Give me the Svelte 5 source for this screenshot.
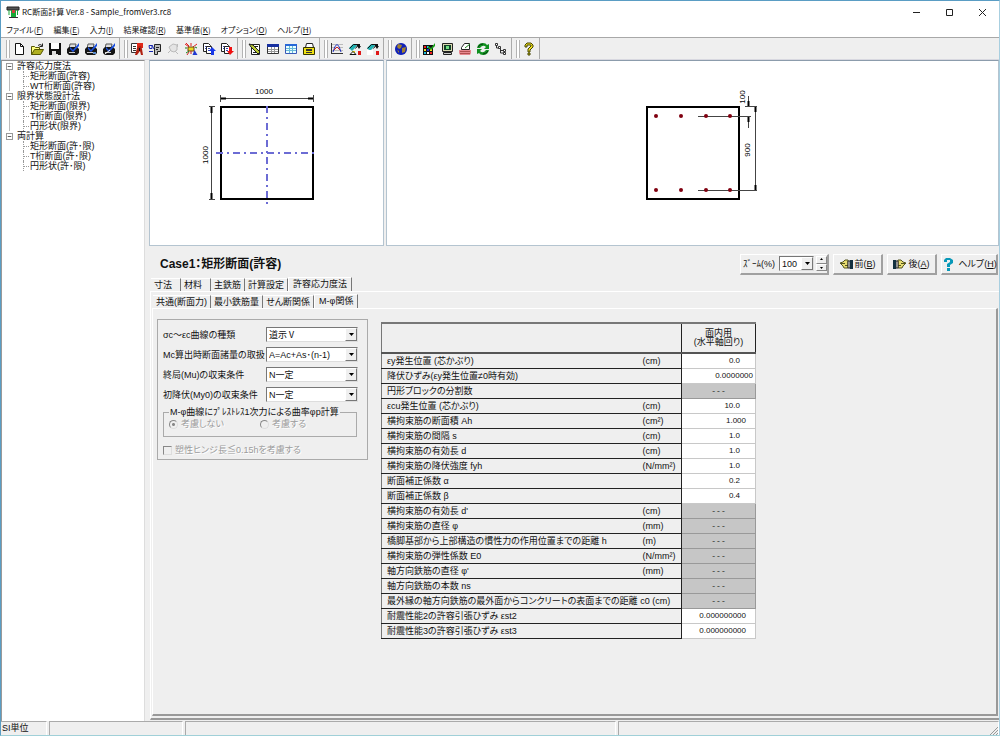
<script lang="ts">
  type Shape = [d: string, fill: string, stroke?: string];
  type Row = { label: string; unit?: string; value?: string; fmt?: string };

  const menus = [
    ['ファイル', 'F'], ['編集', 'E'], ['入力', 'I'], ['結果確認', 'R'],
    ['基準値', 'K'], ['オプション', 'O'], ['ヘルプ', 'H'],
  ];

  const printer: Shape[] = [
    ['M4 2h6l-1 5H3z', '#ddd', '#555'],
    ['M1 7l2-2h8l2 2v4l-2 2H3l-2-2z', '#151515'],
    ['M3 10h6v1H3z', '#ccc'],
    ['M4 5l3 3 6-7v3L7 10 4 7z', '#1a50e0'],
  ];
  const page: Shape[] = [
    ['M1.500 1.500h5l2 2v6h-7z', '#fff', '#222'],
    ['M3 4.500h3M3 6.500h3', 'none', '#3848b0'],
    ['M4.500 4.500h5v7h-5z', '#fff', '#222'],
    ['M6 6.500h2M6 8.500h2', 'none', '#3848b0'],
  ];
  const bridge: Shape[] = [
    ['M1 6l4-4h5l-3 4-3 3z', '#20b0b0'],
    ['M1.500 6.500l4-4h5l-3 4', 'none', '#111'],
    ['M9 2h3v2h1l-2 3-2-3z', '#111'],
    ['M10 9h3v4h-3z', '#e01818'],
  ];

  const icons: Record<string, Shape[]> = {
    new: [['M3.500 1.500h5l3 3v8h-8z', '#fff', '#111'], ['M8.500 1.500v3h3', 'none', '#111']],
    open: [
      ['M1.500 12.500v-8h3l1 1h4v2', '#ffff80', '#555500'],
      ['M1.500 12.500l3-5h9l-3 5z', '#b0b020', '#555500'],
      ['M8 3.500q2-2 4 0M12.500 1.500v3h-3', 'none', '#222'],
    ],
    save: [['M1 1h12v12H1z', '#111'], ['M3 1h8v6H3z', '#fff'], ['M4 9h6v4H4z', '#ddd'], ['M8 9h2v3H8z', '#111']],
    print1: printer,
    print2: [...printer, ['M9 10h3v2H9z', '#58c']],
    print3: [...printer, ['M3 12l5-4', 'none', '#fff']],
    find: [
      ['M1.500 1.500h6v9h-6z', '#fff', '#333'], ['M3 4.500h3M3 6.500h3M3 8.500h3', 'none', '#333'],
      ['M7 1h6v5H7z', '#e02818'], ['M7 6l2-2h2l1 3 1 6h-2l-1-4-3 4H5z', '#b02010'], ['M9.500 6v3', 'none', '#111'],
    ],
    ear: [
      ['M1 3.500h3v3H1.500zM4 3l2 4M1 9.500h4', 'none', '#1828b0'],
      ['M6.500 2.500h6v7h-3v3h-3v-7z', '#bbb', '#222'], ['M8 5.500h3M8 7.500h2', 'none', '#222'],
    ],
    disabled: [
      ['M3 5l4-3 4 1v5l-3 2-3-1z', '#e4e4e4', '#bbb'], ['M2 11l3-3M9 9l3 3M11.500 2v3', 'none', '#bbb'],
    ],
    person: [
      ['M1 2l4 3M13 2l-4 3M7 1v3M2 1l3 3', 'none', '#e02020'], ['M4 5h6v4H4z', '#e8d820', '#704010'],
      ['M2 11l3-2M3 6H1M11 5l2 1', 'none', '#188018'], ['M10.500 8l3 5h-5z', '#2038d0'], ['M5 10l-2 3M7 9v3', 'none', '#d02020'],
    ],
    upload: [...page, ['M10 5l4 4h-2v4H9V9H7z', '#1838e8']],
    download: [...page, ['M9 5h3v4h2l-4 4-3-4h2z', '#f01010']],
    edit: [
      ['M3.500 2.500h8v10h-8z', '#fff', '#222'], ['M1 2l4 1 7 7-2 2-7-7z', '#b8c830', '#222'],
      ['M5 10.500h3M7 4.500h3', 'none', '#222'],
    ],
    table: [
      ['M1.500 2.500h11v9h-11z', '#fff', '#333'], ['M1 2h12v3H1z', '#1830a0'],
      ['M2 7.500h10M2 9.500h10M5.500 5v6M8.500 5v6', 'none', '#999'],
    ],
    list: [
      ['M1.500 2.500h11v9h-11z', '#e8ffff', '#3858b8'], ['M1 2h12v2H1z', '#2868d8'],
      ['M2 6.500h10M2 8.500h10M5.500 4v7M8.500 4v7', 'none', '#68b8d8'],
    ],
    cabinet: [
      ['M4.500 1.500h6l1 4h-8z', '#fff', '#222'], ['M1.500 5.500h11v7h-11z', '#f0e010', '#333300'],
      ['M4 7h6v2H4z', '#333'], ['M4 10.500h6', 'none', '#333'],
    ],
    chart: [
      ['M1.500 1v11M1 11.500h12', 'none', '#333'], ['M2 2.500h11M2 5.500h11M2 8.500h11', 'none', '#bbb'],
      ['M3 10q4-15 8 0', 'none', '#2030c0'], ['M4 8l3-3 3 3', 'none', '#d02020'],
    ],
    bridge1: [...bridge, ['M4 9h3v2H4z', '#e8d810'], ['M2 12.500l3-3 3 3z', '#fff', '#111']],
    bridge2: [...bridge, ['M1 8h6v5H1z', '#fff']],
    globe: [
      ['M7 1a6 6 0 1 0 .01 0z', '#1020b8'], ['M4 2l4 1-1 3-2 1-2-2zM8 6l4-1-1 5-3 1z', '#a08030'],
      ['M3 8l2 1v2z', '#a08030'],
    ],
    colors: [
      ['M1 3h10v10H1z', '#111'], ['M2 4h2v2H2zM8 10h2v2H8z', '#f02020'], ['M5 4h2v2H5zM2 10h2v2H2z', '#20c0e0'],
      ['M2 7h2v2H2zM8 7h2v2H8z', '#f0e020'], ['M5 7h2v2H5z', '#2030e0'], ['M5 10h2v2H5z', '#fff'],
      ['M6 4l3 2 4-5v3L9 8 6 6z', '#18a018'],
    ],
    monitor: [
      ['M2.500 1.500h10v8h-10z', '#d8d8b0', '#222'], ['M4 3h7v5H4z', '#104028'], ['M6 4h3v3H6z', '#70e080'],
      ['M3.500 10.500h8v2h-8z', '#ccc', '#222'],
    ],
    book: [
      ['M3.500 5.500l3-4h5v6h-8z', '#fff', '#222'], ['M1 8h12v3l-1 2H2l-1-2z', '#e88890'],
      ['M2 9.500h10M2 11.500h10', 'none', '#b05050'], ['M7 6l5-4', 'none', '#188018'],
    ],
    refresh: [
      ['M1 6q1-5 6-5 3 0 4 2l2-1v5H8l2-2q-3-3-6 1z', '#109020'],
      ['M13 8q-1 5-6 5-3 0-4-2l-2 1V7h5L4 9q3 3 6-1z', '#109020'],
      ['M2 5q2-3 5-3M12 9q-2 3-5 3', 'none', '#084010'],
    ],
    tree: [
      ['M2.500 3v3h4M6.500 6v5h4M6.500 8.500h4', 'none', '#333'],
      ['M1.500 1.500h2v2h-2zM4.500 4.500h2v2h-2zM9.500 7.500h2v2h-2zM9.500 10.500h2v2h-2z', '#fff', '#333'],
    ],
    help: [
      ['M3 5V3l2-2h4l2 2v2L8 8v2H6V7l3-3V3H5v2z', '#f0e020', '#444400'], ['M6 11h2v2H6z', '#f0e020', '#444400'],
    ],
    handLeft: [
      ['M1 6l3-1 2-2h3v8H5L4 9z', '#e8dc70', '#555520'], ['M1 6.500h5M6 8.500h3', 'none', '#555520'],
      ['M9 4h2v7H9z', '#fff', '#222'], ['M11 3h3v9h-3z', '#123040'],
    ],
    handRight: [
      ['M13 6l-3-1-2-2H5v8h4l1-2z', '#e8dc70', '#555520'], ['M13 6.500H8M8 8.500H5', 'none', '#555520'],
      ['M3 4h2v7H3z', '#fff', '#222'], ['M0 3h3v9H0z', '#123040'],
    ],
    question: [['M3 5V3l2-2h4l3 2v3L9 8v2H6V7l3-2V3H6v2z', '#0898b8'], ['M6 11h3v3H6z', '#0898b8']],
    app: [
      ['M1 2h12v3H1z', '#555', '#222'], ['M5 5h5v8H5z', '#18a838'], ['M6 5h3v3H6z', '#d04040'],
      ['M3 5v5M11.500 5v5', 'none', '#18a838'], ['M3 12.500h9', 'none', '#333'],
    ],
  };

  const toolbar = [
    ['new', 'open', 'save', 'print1', 'print2', 'print3'],
    ['find', 'ear', 'disabled', 'person', 'upload', 'download'],
    ['edit', 'table', 'list', 'cabinet'],
    ['chart', 'bridge1', 'bridge2'],
    ['globe'],
    ['colors', 'monitor', 'book', 'refresh', 'tree'],
    ['help'],
  ];

  let tree = $state([
    { name: '許容応力度法', open: true, items: ['矩形断面(許容)', 'WT桁断面(許容)'] },
    { name: '限界状態設計法', open: true, items: ['矩形断面(限界)', 'T桁断面(限界)', '円形状(限界)'] },
    { name: '両計算', open: true, items: ['矩形断面(許･限)', 'T桁断面(許･限)', '円形状(許･限)'] },
  ]);

  const mainTabs = ['寸法', '材料', '主鉄筋', '計算設定', '許容応力度法'];
  const subTabs = ['共通(断面力)', '最小鉄筋量', 'せん断関係', 'M-φ関係'];
  let mainTab = $state(4);
  let subTab = $state(3);

  const combos = [
    { id: 'curve', label: 'σc～εc曲線の種類', value: '道示Ⅴ' },
    { id: 'mc', label: 'Mc算出時断面諸量の取扱', value: 'A=Ac+As･(n-1)' },
    { id: 'mu', label: '終局(Mu)の収束条件', value: 'N一定' },
    { id: 'my0', label: '初降伏(My0)の収束条件', value: 'N一定' },
  ];

  // rows without a value are not editable for the current settings
  const rows: Row[] = [
    { label: 'εy発生位置 (芯かぶり)', unit: '(cm)', value: '0.0' },
    { label: '降伏ひずみ(εy発生位置≠0時有効)', value: '0.0000000', fmt: 'full' },
    { label: '円形ブロックの分割数' },
    { label: 'εcu発生位置 (芯かぶり)', unit: '(cm)', value: '10.0' },
    { label: '横拘束筋の断面積 Ah', unit: '(cm²)', value: '1.000', fmt: 'long' },
    { label: '横拘束筋の間隔 s', unit: '(cm)', value: '1.0' },
    { label: '横拘束筋の有効長 d', unit: '(cm)', value: '1.0' },
    { label: '横拘束筋の降伏強度 fyh', unit: '(N/mm²)', value: '1.0' },
    { label: '断面補正係数 α', value: '0.2' },
    { label: '断面補正係数 β', value: '0.4' },
    { label: "横拘束筋の有効長 d'", unit: '(cm)' },
    { label: '横拘束筋の直径 φ', unit: '(mm)' },
    { label: '橋脚基部から上部構造の慣性力の作用位置までの距離 h', unit: '(m)' },
    { label: '横拘束筋の弾性係数 E0', unit: '(N/mm²)' },
    { label: "軸方向鉄筋の直径 φ'", unit: '(mm)' },
    { label: '軸方向鉄筋の本数 ns' },
    { label: '最外縁の軸方向鉄筋の最外面からコンクリートの表面までの距離 c0 (cm)' },
    { label: '耐震性能2の許容引張ひずみ εst2', value: '0.000000000', fmt: 'long' },
    { label: '耐震性能3の許容引張ひずみ εst3', value: '0.000000000', fmt: 'long' },
  ];

  const bars = [43, 68, 93, 117];
</script>

{#snippet icon(name: string)}
  <svg class="icon" viewBox="0 0 14 14" aria-hidden="true">
    {#each icons[name] as [d, fill, stroke]}
      <path {d} {fill} stroke={stroke ?? 'none'} />
    {/each}
  </svg>
{/snippet}

{#snippet arrow()}
  <span class="arrow" aria-hidden="true">
    <svg viewBox="0 0 5 3"><path d="M0 0h5L2.500 3z" /></svg>
  </span>
{/snippet}

<div class="window">
  <header class="titlebar">
    {@render icon('app')}
    <span class="title">RC断面計算 Ver.8 - Sample_fromVer3.rc8</span>
    <button class="caption" aria-label="最小化"><svg viewBox="0 0 9 9"><path d="M1 4.500h7" /></svg></button>
    <button class="caption" aria-label="最大化"><svg viewBox="0 0 9 9"><path d="M1.500 1.500h6v6h-6z" /></svg></button>
    <button class="caption" aria-label="閉じる"><svg viewBox="0 0 9 9"><path d="M1 1l7 7M8 1L1 8" /></svg></button>
  </header>

  <nav class="menubar">
    {#each menus as [name, key]}
      <button>{name}(<u>{key}</u>)</button>
    {/each}
  </nav>

  <div class="toolbar">
    {#each toolbar as group}
      <div class="tool-group">
        <span class="grip"></span>
        {#each group as name}
          <button class="tool" aria-label={name} disabled={name === 'disabled'}>{@render icon(name)}</button>
        {/each}
      </div>
    {/each}
  </div>

  <div class="workspace">
    <aside class="tree">
      <ul>
        {#each tree as node}
          <li class="branch">
            <div class="node">
              <button class="toggle" aria-label={node.name} onclick={() => (node.open = !node.open)}>
                <svg viewBox="0 0 7 7"><path d={node.open ? 'M1 3.500h5' : 'M1 3.500h5M3.500 1v5'} /></svg>
              </button>
              <span>{node.name}</span>
            </div>
            {#if node.open}
              <ul class="leaves">
                {#each node.items as item}
                  <li><button>{item}</button></li>
                {/each}
              </ul>
            {/if}
          </li>
        {/each}
      </ul>
    </aside>

    <main>
      <div class="previews">
        <section class="preview shape">
          <svg class="drawing" viewBox="0 0 160 160">
            <path class="dim" d="M34 25.500h92M33.500 22v7M126.500 22v7M24.500 34v92M22 33.500h6M22 126.500h6" />
            <path class="tick" d="M34 25.500h5M121 25.500h5M24.500 34v6M24.500 120v6" />
            <rect class="outline" x="34" y="34" width="92" height="92" />
            <path class="axis" d="M80 33v99M29 80h101" />
            <text x="77" y="21">1000</text>
            <text transform="translate(21 82) rotate(-90)">1000</text>
          </svg>
        </section>
        <section class="preview rebar">
          <svg class="drawing" viewBox="0 0 160 160">
            <rect class="outline" x="34" y="34" width="92" height="92" />
            <path class="dim" d="M85 43.500h53M85 117.500h59M132 33.500h12M142.500 34v84M135.500 23v10M135.500 44v11" />
            <path class="tick" d="M142.500 34v5M142.500 112v5M135.500 28v5M135.500 44v5" />
            {#each bars as x}
              <circle class="bar" cx={x} cy="43" r="2" />
              <circle class="bar" cx={x} cy="117" r="2" />
            {/each}
            <text transform="translate(132 24) rotate(-90)">100</text>
            <text transform="translate(137 77) rotate(-90)">900</text>
          </svg>
        </section>
      </div>

      <div class="case-bar">
        <h1>Case1：矩形断面(許容)</h1>
        <div class="zoom raised">
          <label for="zoom">ｽﾞｰﾑ(%)</label>
          <span class="combo zoom-combo">
            <select id="zoom"><option>100</option></select>
            {@render arrow()}
          </span>
          <span class="spinner">
            <button aria-label="拡大"><svg viewBox="0 0 5 3"><path d="M1 2h3L2.500 0z" /></svg></button>
            <button aria-label="縮小"><svg viewBox="0 0 5 3"><path d="M1 1h3L2.500 3z" /></svg></button>
          </span>
        </div>
        <button class="raised command">{@render icon('handLeft')}<span>前(<u>B</u>)</span></button>
        <button class="raised command">{@render icon('handRight')}<span>後(<u>A</u>)</span></button>
        <button class="raised command help">{@render icon('question')}<span>ヘルプ(<u>H</u>)</span></button>
      </div>

      <div class="tabs main-tabs" role="tablist">
        {#each mainTabs as tab, i}
          <button role="tab" aria-selected={mainTab === i} class:selected={mainTab === i} onclick={() => (mainTab = i)}>{tab}</button>
        {/each}
      </div>

      <div class="page outer">
        <div class="tabs sub-tabs" role="tablist">
          {#each subTabs as tab, i}
            <button role="tab" aria-selected={subTab === i} class:selected={subTab === i} onclick={() => (subTab = i)}>{tab}</button>
          {/each}
        </div>

        <div class="page inner">
          <form class="settings">
            {#each combos as combo}
              <div class="field">
                <label for={combo.id}>{combo.label}</label>
                <span class="combo">
                  <select id={combo.id}><option>{combo.value}</option></select>
                  {@render arrow()}
                </span>
              </div>
            {/each}
            <fieldset>
              <legend>M-φ曲線にﾌﾟﾚｽﾄﾚｽ1次力による曲率φp計算</legend>
              <label><input type="radio" name="prestress" checked disabled />考慮しない</label>
              <label><input type="radio" name="prestress" disabled />考慮する</label>
            </fieldset>
            <label class="hinge"><input type="checkbox" disabled />塑性ヒンジ長≦0.15hを考慮する</label>
          </form>

          <table>
            <thead>
              <tr>
                <th class="head" colspan="2"></th>
                <th class="head direction">面内用<br />(水平軸回り)</th>
              </tr>
            </thead>
            <tbody>
              {#each rows as row}
                <tr>
                  {#if row.unit}
                    <th class="label" scope="row">{row.label}</th>
                    <td class="unit">{row.unit}</td>
                  {:else}
                    <th class="label whole" scope="row" colspan="2">{row.label}</th>
                  {/if}
                  {#if row.value}
                    <td class="value {row.fmt ?? ''}">{row.value}</td>
                  {:else}
                    <td class="value locked">---</td>
                  {/if}
                </tr>
              {/each}
            </tbody>
          </table>
        </div>
      </div>
    </main>
  </div>

  <footer class="statusbar">
    <span class="pane unit-system">SI単位</span>
    <span class="pane message"></span>
    <span class="pane detail"></span>
    <span class="pane rest">
      <svg viewBox="0 0 9 9"><path d="M1 9l8-8M4 9l5-5M7 9l2-2" /></svg>
    </span>
  </footer>
</div>

<style>
  :global(body) {
    background: #efefef;
  }
  .window {
    display: flex;
    flex-direction: column;
    min-height: 100vh;
    box-sizing: border-box;
    border: 1px solid #5a9dc4;
    border-right-color: #a8cfe0;
    border-bottom-color: #a0d0d8;
    background: #efefef;
    color: #111;
    font-family: "Liberation Sans", "Noto Sans CJK JP", sans-serif;
    font-size: 9px;
    line-height: 10px;
    font-feature-settings: "palt";
    white-space: nowrap;
  }
  button, select {
    font: inherit;
    font-feature-settings: inherit;
    color: inherit;
  }
  button {
    padding: 0;
    border: 0;
    background: none;
  }
  ul {
    margin: 0;
    padding: 0;
    list-style: none;
  }
  .icon {
    display: block;
    flex: none;
    width: 14px;
    height: 14px;
  }

  .titlebar {
    display: flex;
    align-items: center;
    height: 22px;
    padding-left: 5px;
    background: #fff;
    font-family: "Noto Sans CJK JP", sans-serif;
    font-size: 8px;
  }
  .title {
    flex: 1;
    padding-left: 2px;
  }
  .caption {
    display: flex;
    align-items: center;
    justify-content: center;
    width: 33px;
    height: 20px;
  }
  .caption svg {
    width: 9px;
    height: 9px;
    fill: none;
    stroke: #222;
  }
  .menubar {
    display: flex;
    gap: 10px;
    height: 14px;
    padding-left: 5px;
    background: #fff;
    font-family: "Noto Sans CJK JP", sans-serif;
    font-size: 8px;
  }

  .toolbar {
    display: flex;
    box-sizing: border-box;
    height: 23px;
    padding-left: 1px;
    border-top: 1px solid #a8a8a8;
    border-bottom: 1px solid #d8d8e0;
  }
  .tool-group {
    display: flex;
    align-items: center;
    padding: 0 1px 0 4px;
    border-right: 1px solid #aaa;
  }
  .grip {
    box-sizing: border-box;
    width: 4px;
    height: 18px;
    border-left: 1px solid #b4b4b4;
    border-right: 1px solid #b4b4b4;
    background: #fff;
  }
  .tool {
    display: flex;
    justify-content: center;
    width: 18px;
  }

  .workspace {
    display: flex;
    flex: 1;
  }
  .tree {
    box-sizing: border-box;
    flex: none;
    width: 144px;
    padding: 0 0 0 4px;
    border-top: 1px solid #8e8e8e;
    border-left: 1px solid #999;
    border-right: 1px solid #ddd;
    background: #fff;
  }
  .branch:not(:last-child) {
    background: linear-gradient(#bbb, #bbb) 3px 8px / 1px 100% no-repeat;
  }
  .node {
    display: flex;
    align-items: center;
    height: 10px;
  }
  .toggle {
    display: flex;
    box-sizing: border-box;
    width: 7px;
    height: 7px;
    margin-right: 4px;
    border: 1px solid #999;
    background: #fff;
  }
  .toggle svg {
    width: 100%;
    stroke: #222;
  }
  .leaves {
    margin-left: 17px;
  }
  .leaves li {
    display: flex;
    height: 10px;
    border-left: 1px dotted #999;
    align-items: center;
  }
  .leaves li::before {
    content: "";
    width: 5px;
    margin-right: 1px;
    border-top: 1px dotted #999;
  }

  main {
    display: flex;
    flex: 1;
    flex-direction: column;
    min-width: 0;
    padding-left: 4px;
  }
  .previews {
    display: flex;
    gap: 2px;
    height: 186px;
  }
  .preview {
    display: flex;
    align-items: center;
    justify-content: center;
    box-sizing: border-box;
    border: 1px solid #b4c4d0;
    border-top-color: #8c9cac;
    background: #fff;
  }
  .shape {
    width: 235px;
  }
  .rebar {
    flex: 1;
  }
  .drawing {
    width: 160px;
    height: 160px;
  }
  .drawing text {
    font-size: 8px;
    text-anchor: middle;
  }
  .outline {
    fill: none;
    stroke: #000;
    stroke-width: 2;
  }
  .dim {
    fill: none;
    stroke: #444;
  }
  .tick {
    fill: none;
    stroke: #000;
    stroke-width: 2;
  }
  .axis {
    fill: none;
    stroke: #6c6cd4;
    stroke-width: 2;
    stroke-dasharray: 7 4 2 4;
  }
  .bar {
    fill: #800010;
  }

  .case-bar {
    display: flex;
    align-items: center;
    gap: 4px;
    height: 22px;
    padding: 7px 1px 3px 11px;
  }
  h1 {
    flex: 1;
    margin: 0;
    font-size: 12px;
    line-height: 16px;
  }
  .raised {
    display: flex;
    align-items: center;
    box-sizing: border-box;
    height: 21px;
    border: 1px solid #fff;
    border-right: 2px solid #a0a0a0;
    border-bottom: 2px solid #a0a0a0;
  }
  .command {
    justify-content: center;
    gap: 1px;
    width: 50px;
  }
  .help {
    gap: 3px;
    width: 57px;
  }
  .zoom {
    gap: 2px;
    width: 89px;
    padding-left: 2px;
  }
  .zoom label {
    width: 34px;
  }

  .combo {
    display: flex;
    box-sizing: border-box;
    width: 92px;
    height: 15px;
    border: 1px solid #777;
    border-right-color: #ddd;
    border-bottom-color: #ddd;
    background: #fff;
  }
  .combo select {
    flex: 1;
    min-width: 0;
    padding: 0 2px;
    border: 0;
    background: #fff;
    appearance: none;
  }
  .arrow {
    display: flex;
    align-items: center;
    justify-content: center;
    box-sizing: border-box;
    width: 12px;
    border: 1px solid #fff;
    border-right-color: #777;
    border-bottom-color: #777;
    background: #efefef;
    pointer-events: none;
  }
  .arrow svg, .spinner svg {
    width: 5px;
    height: 3px;
  }
  .zoom-combo {
    width: 35px;
  }
  .spinner {
    display: grid;
    width: 11px;
    height: 15px;
  }
  .spinner button {
    display: flex;
    align-items: center;
    justify-content: center;
    border: 1px solid #fff;
    border-right-color: #888;
    border-bottom-color: #888;
  }

  .tabs {
    display: flex;
    align-items: flex-end;
  }
  .tabs button {
    height: 13px;
    padding: 0 3px;
    border-top: 1px solid #fff;
    border-right: 1px solid #777;
  }
  .tabs button.selected {
    height: 14px;
    padding: 0 4px 2px;
    border-left: 1px solid #fff;
  }
  .main-tabs {
    height: 13px;
    padding-left: 2px;
  }
  .main-tabs button {
    min-width: 30px;
    text-align: left;
  }
  .sub-tabs {
    height: 16px;
    padding-left: 1px;
  }
  .page {
    border: 1px solid #fff;
    border-right: 2px solid #999;
    border-bottom: 2px solid #999;
  }
  .outer {
    display: flex;
    flex: 1;
    flex-direction: column;
    margin: 0 0 1px 1px;
    padding: 0 0 2px 1px;
    border-right: 0;
  }
  .inner {
    display: flex;
    flex: 1;
    align-items: flex-start;
    gap: 13px;
    margin-right: 1px;
    padding: 10px 4px;
  }

  .settings {
    box-sizing: border-box;
    width: 211px;
    height: 141px;
    padding: 7px 5px;
    border: 1px solid #aaa;
  }
  .field {
    display: flex;
    align-items: center;
    height: 15px;
    margin-bottom: 5px;
  }
  .field label {
    width: 103px;
  }
  fieldset {
    display: flex;
    box-sizing: border-box;
    width: 191px;
    height: 30px;
    margin: 0 0 8px;
    padding: 2px 5px 0;
    border: 1px solid #aaa;
  }
  legend {
    padding: 0 1px;
  }
  fieldset label, .hinge {
    display: flex;
    align-items: center;
    height: 10px;
    gap: 3px;
    color: #9c9c9c;
    text-shadow: 1px 1px #fff;
  }
  fieldset label {
    width: 91px;
  }
  .settings input {
    box-sizing: border-box;
    width: 9px;
    height: 9px;
    margin: 0;
    border: 1px solid #888;
    border-right-color: #ddd;
    border-bottom-color: #ddd;
    appearance: none;
  }
  .settings input[type="radio"] {
    border-radius: 50%;
  }
  .settings input[type="radio"]:checked {
    background: radial-gradient(circle, #888 0 1px, transparent 2px);
  }

  table {
    margin-top: 3px;
    border-collapse: collapse;
    border-top: 2px solid #777;
    border-left: 1px solid #777;
  }
  th, td {
    box-sizing: border-box;
    height: 15px;
    padding: 0;
    font-weight: normal;
    line-height: 10px;
    text-align: left;
  }
  .head {
    height: 30px;
    border-bottom: 2px solid #555;
    border-right: 1px solid #222;
  }
  .direction {
    text-align: center;
    line-height: 9px;
  }
  .label {
    width: 261px;
    padding-left: 5px;
    border-bottom: 1px solid #222;
  }
  .whole {
    width: 300px;
    border-right: 1px solid #222;
  }
  .unit {
    width: 39px;
    border-bottom: 1px solid #222;
    border-right: 1px solid #222;
  }
  .value {
    width: 74px;
    padding-right: 15px;
    border: 1px solid #c8c8c8;
    border-left-color: #222;
    background: #fff;
    font-size: 8px;
    text-align: right;
  }
  .long {
    padding-right: 9px;
  }
  .full {
    padding-right: 2px;
  }
  .locked {
    padding: 0;
    border: 1px solid #999;
    border-left-color: #222;
    background: #c6c6c6;
    font-family: "Liberation Mono", monospace;
    text-align: center;
  }

  .statusbar {
    display: flex;
    gap: 2px;
    height: 14px;
  }
  .pane {
    box-sizing: border-box;
    border-top: 1px solid #aaa;
    border-left: 1px solid #aaa;
    border-right: 1px solid #fff;
    line-height: 13px;
  }
  .unit-system {
    width: 46px;
    border-left: 0;
    padding-left: 1px;
  }
  .message {
    width: 134px;
  }
  .detail {
    width: 431px;
  }
  .rest {
    display: flex;
    flex: 1;
    align-items: flex-end;
    justify-content: flex-end;
  }
  .rest svg {
    width: 9px;
    height: 9px;
    stroke: #999;
  }
</style>
